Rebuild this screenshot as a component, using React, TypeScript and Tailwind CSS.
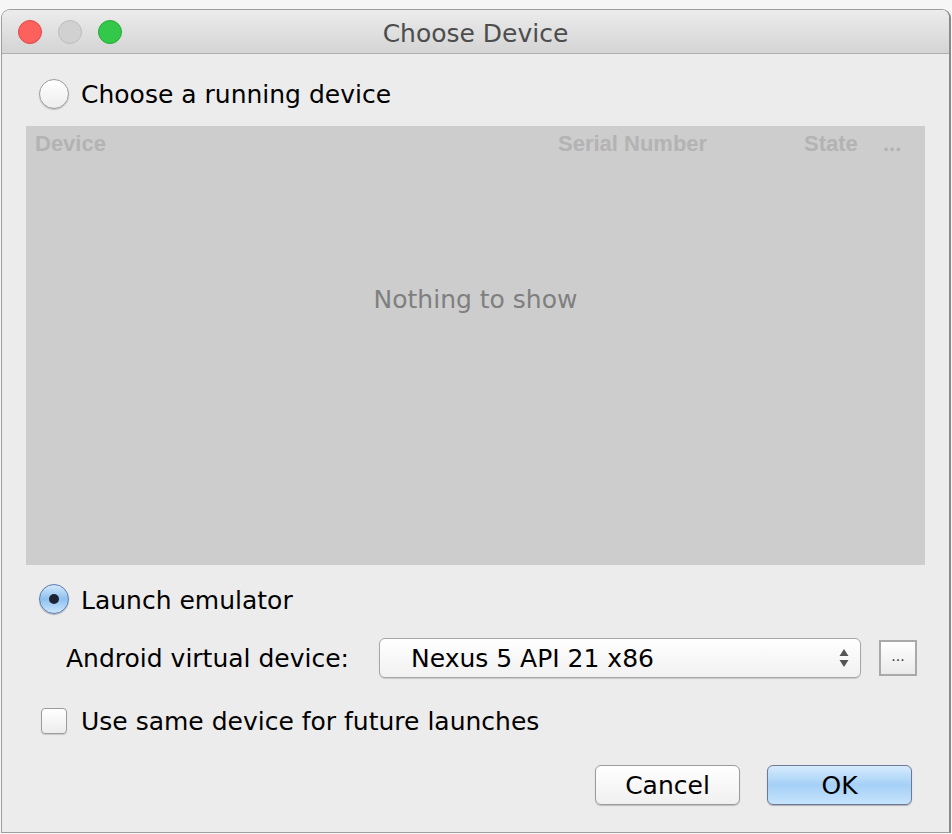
import React from "react";

const font = { fontFamily: '"DejaVu Sans", "Liberation Sans", sans-serif' };

function Radio({ checked }: { checked?: boolean }) {
  if (checked) {
    return (
      <div className="w-[30px] h-[30px] rounded-full border border-[#5a7ab0] bg-gradient-to-b from-[#d5e9fb] via-[#8cc0ef] to-[#cde6fc] shadow-[0_1px_1px_rgba(0,0,0,0.25)] flex items-center justify-center shrink-0">
        <div className="w-[10px] h-[10px] rounded-full bg-[#1c2433]" />
      </div>
    );
  }
  return (
    <div className="w-[30px] h-[30px] rounded-full border border-[#9c9c9c] bg-gradient-to-b from-white to-[#ededed] shadow-[0_1px_1px_rgba(0,0,0,0.2)] shrink-0" />
  );
}

export default function App() {
  return (
    <div className="w-[952px] h-[834px] bg-[#f6f6f6] pt-[9px] pl-[1px] overflow-hidden" style={font}>
      <div className="w-[950px] h-[824px] border border-[#9e9e9e] border-r-2 border-r-[#8a8a8a] rounded-t-[9px] overflow-hidden bg-[#ececec] flex flex-col">
        {/* Title bar */}
        <div className="h-[44px] shrink-0 bg-gradient-to-b from-[#ececec] to-[#d4d4d4] border-b border-[#afafaf] grid grid-cols-[1fr_auto_1fr] items-center">
          <div className="flex items-center gap-[16px] pl-[16px]">
            <div className="w-[24px] h-[24px] rounded-full bg-[#fc615d] border border-[#df4744]" />
            <div className="w-[24px] h-[24px] rounded-full bg-[#d1d1d1] border border-[#bcbcbc]" />
            <div className="w-[24px] h-[24px] rounded-full bg-[#34c84a] border border-[#25a935]" />
          </div>
          <div className="text-[25px] text-[#4d4d4d] leading-none pt-[3px]">Choose Device</div>
          <div />
        </div>

        {/* Body */}
        <div className="flex flex-col px-[24px] text-[25px] text-black">
          <div className="mt-[25px] h-[30px] flex items-center pl-[13px] gap-[12px]">
            <Radio />
            <span className="leading-none">Choose a running device</span>
          </div>

          <div className="mt-[17px] h-[439px] bg-[#cdcdcd] flex flex-col">
            <div
              className="h-[34px] flex items-center text-[22px] font-bold text-[#b3b3b3]"
              style={{ fontFamily: '"Liberation Sans", Arial, sans-serif' }}
            >
              <span className="pl-[9px] w-[532px]">Device</span>
              <span className="w-[246px]">Serial Number</span>
              <span className="w-[79px]">State</span>
              <span>...</span>
            </div>
            <div className="mt-[125px] flex justify-center">
              <span className="text-[#7f7f7f] text-[25px] leading-[30px]">Nothing to show</span>
            </div>
          </div>

          <div className="mt-[19px] h-[30px] flex items-center pl-[13px] gap-[12px]">
            <Radio checked />
            <span className="leading-none pt-[2px]">Launch emulator</span>
          </div>

          <div className="mt-[24px] h-[40px] flex items-center pl-[40px]">
            <span className="w-[313px] leading-none">Android virtual device:</span>
            <div className="w-[482px] h-[40px] rounded-[6px] border border-[#a6a6a6] bg-gradient-to-b from-white to-[#f1f1f1] shadow-[0_1px_1px_rgba(0,0,0,0.15)] flex items-center pl-[31px] pr-[10px]">
              <span className="flex-1 leading-none">Nexus 5 API 21 x86</span>
              <svg width="12" height="26" viewBox="0 0 12 26">
                <path d="M6 4 L10.5 11 L1.5 11 Z" fill="#555" />
                <path d="M6 22 L10.5 15 L1.5 15 Z" fill="#555" />
              </svg>
            </div>
            <div className="ml-[18px] w-[38px] h-[36px] border-2 border-[#a9a9a9] bg-gradient-to-b from-white to-[#eaeaea] flex items-center justify-center text-[14px] text-[#333] pb-[4px]">
              ...
            </div>
          </div>

          <div className="mt-[28px] h-[30px] flex items-center pl-[15px] gap-[14px]">
            <div className="w-[26px] h-[26px] rounded-[4px] border border-[#9c9c9c] bg-gradient-to-b from-white to-[#ececec] shadow-[0_1px_1px_rgba(0,0,0,0.15)] shrink-0" />
            <span className="leading-none">Use same device for future launches</span>
          </div>

          <div className="mt-[29px] flex justify-end gap-[27px] pr-[13px]">
            <div className="w-[145px] h-[40px] rounded-[6px] border border-[#9b9b9b] bg-gradient-to-b from-white to-[#f0f0f0] shadow-[0_1px_1px_rgba(0,0,0,0.2)] flex items-center justify-center leading-none">
              Cancel
            </div>
            <div className="w-[145px] h-[40px] rounded-[6px] border border-[#6c7a99] bg-gradient-to-b from-[#d6ebfd] via-[#a5d0f7] to-[#c6e4fc] shadow-[0_1px_1px_rgba(0,0,0,0.25)] flex items-center justify-center leading-none">
              OK
            </div>
          </div>
        </div>
      </div>
    </div>
  );
}
